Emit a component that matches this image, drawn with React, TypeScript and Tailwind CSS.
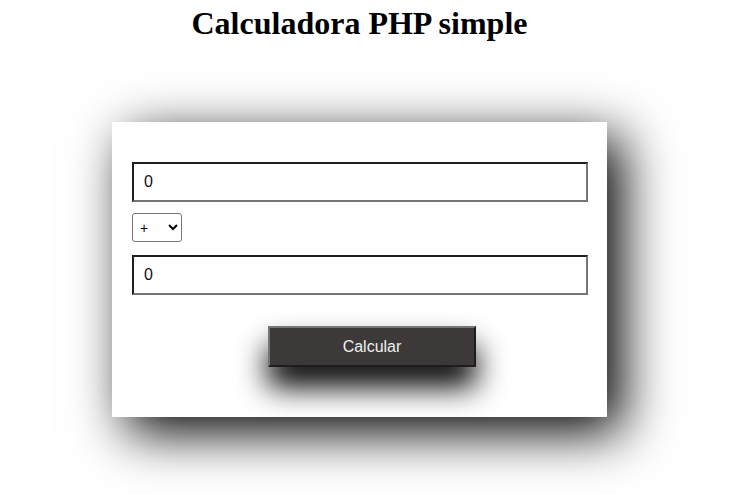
import { useState } from "react";

export default function App() {
  const [a, setA] = useState("0");
  const [b, setB] = useState("0");
  const [op, setOp] = useState("+");

  return (
    <div className="min-h-[495px] w-[752px] bg-white font-['Liberation_Sans',Arial,sans-serif]">
      <div className="flex w-[719px] flex-col items-center">
        <h1 className="mt-[5px] font-['Liberation_Serif','Times_New_Roman',serif] text-[32px] font-bold leading-[37px] text-black">
          Calculadora PHP simple
        </h1>

        {/* Card */}
        <form
          onSubmit={(e) => e.preventDefault()}
          className="mt-[80px] flex w-[495px] flex-col bg-white pt-10 pr-[19px] pb-[50px] pl-5 shadow-[15px_15px_50px_#000]"
        >
          <input
            value={a}
            onChange={(e) => setA(e.target.value)}
            className="h-10 w-full border-2 border-t-[#1f1f1f] border-l-[#1f1f1f] border-r-[#767676] border-b-[#767676] bg-white px-[10px] text-[16px] text-[#111] outline-none"
          />
          <select
            value={op}
            onChange={(e) => setOp(e.target.value)}
            className="mt-[11px] h-[29px] w-[50px] rounded-[3px] border border-[#767676] bg-white pl-[3px] text-[14px] text-black"
          >
            <option value="+">+</option>
            <option value="-">-</option>
            <option value="*">*</option>
            <option value="/">/</option>
          </select>
          <input
            value={b}
            onChange={(e) => setB(e.target.value)}
            className="mt-[13px] h-10 w-full border-2 border-t-[#1f1f1f] border-l-[#1f1f1f] border-r-[#767676] border-b-[#767676] bg-white px-[10px] text-[16px] text-[#111] outline-none"
          />
          <button
            type="submit"
            className="mt-[31px] ml-[136px] h-[41px] w-[208px] border-2 border-t-[#787575] border-l-[#787575] border-r-[#1e1c1c] border-b-[#1e1c1c] bg-[#3d3938] text-[16px] text-[#f0f0f0] shadow-[0_20px_30px_#000]"
          >
            Calcular
          </button>
        </form>
      </div>
    </div>
  );
}
